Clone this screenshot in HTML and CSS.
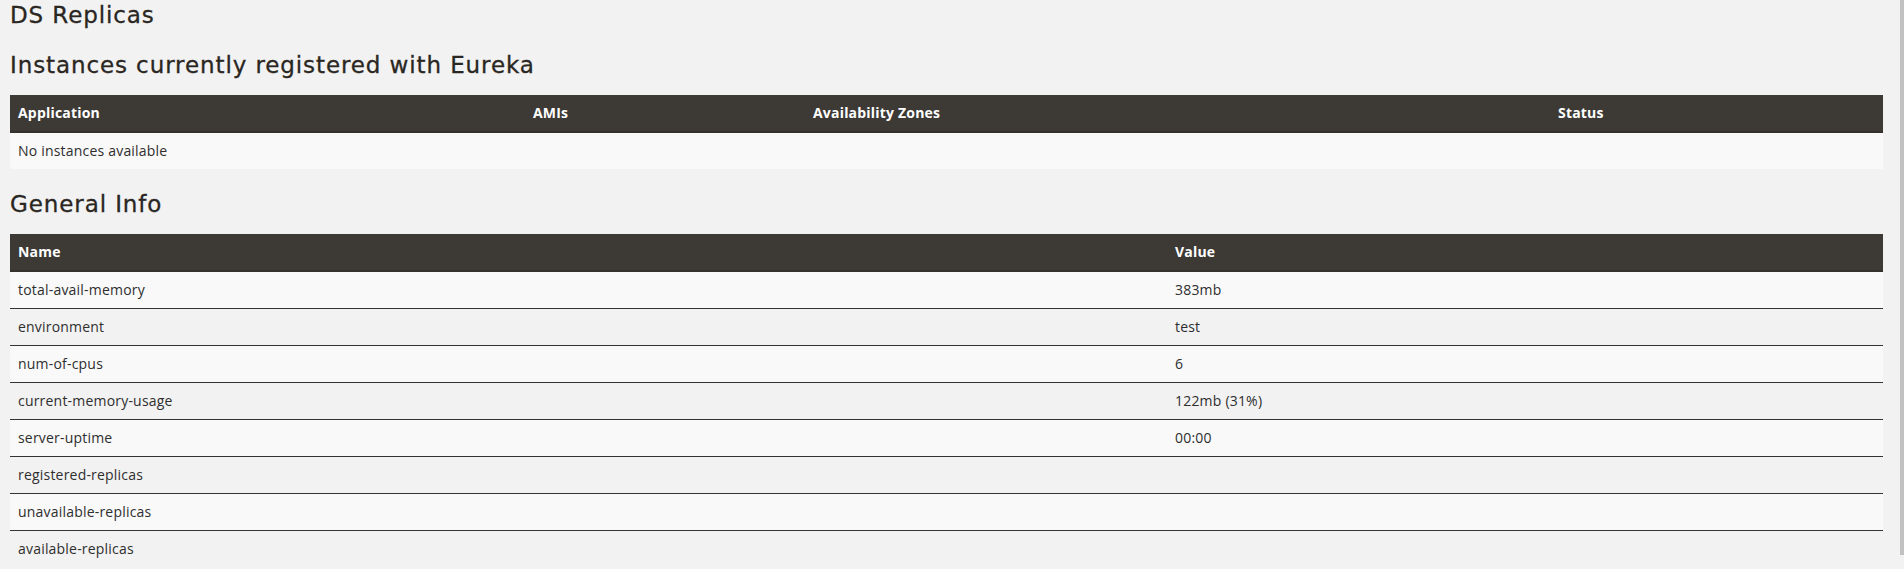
FILE: index.html
```html
<!DOCTYPE html>
<html lang="en">
<head>
<meta charset="utf-8">
<title>Eureka</title>
<link rel="stylesheet" href="styles.css">
</head>
<body>
<main class="page">
  <h1 class="title">DS Replicas</h1>
  <h2 class="section-title">Instances currently registered with Eureka</h2>
  <table class="grid">
    <colgroup>
      <col class="c-app"><col class="c-ami"><col class="c-zone"><col class="c-status">
    </colgroup>
    <thead>
      <tr><th>Application</th><th>AMIs</th><th>Availability Zones</th><th>Status</th></tr>
    </thead>
    <tbody>
      <tr><td colspan="4">No instances available</td></tr>
    </tbody>
  </table>

  <h2 class="section-title gap-top">General Info</h2>
  <table class="grid">
    <colgroup>
      <col class="c-name"><col class="c-value">
    </colgroup>
    <thead>
      <tr><th>Name</th><th>Value</th></tr>
    </thead>
    <tbody>
      <tr><td>total-avail-memory</td><td>383mb</td></tr>
      <tr><td>environment</td><td>test</td></tr>
      <tr><td>num-of-cpus</td><td>6</td></tr>
      <tr><td>current-memory-usage</td><td>122mb (31%)</td></tr>
      <tr><td>server-uptime</td><td>00:00</td></tr>
      <tr><td>registered-replicas</td><td></td></tr>
      <tr><td>unavailable-replicas</td><td></td></tr>
      <tr><td>available-replicas</td><td></td></tr>
    </tbody>
  </table>
</main>
<div class="scroll-thumb"></div>
</body>
</html>
```
FILE: styles.css
```css
html, body {
  margin: 0;
  padding: 0;
  background: #f2f2f2;
  overflow: hidden;
}

body {
  font-family: "Open Sans", "Noto Sans", sans-serif;
  font-size: 14px;
  line-height: 20px;
  color: #2e2e2e;
}

.page {
  padding: 0 21px 0 10px;
}

.title,
.section-title {
  font-family: "DejaVu Sans", sans-serif;
  font-weight: normal;
  font-size: 23px;
  line-height: 26px;
  letter-spacing: 0.9px;
  color: #2a2622;
  -webkit-text-stroke: 0.3px #2a2622;
  margin: 0;
}

.title {
  margin-top: 2px;
}

.section-title {
  margin-top: 24px;
}

.section-title.gap-top {
  margin-top: 22px;
}

.grid {
  width: 100%;
  border-collapse: collapse;
  border-spacing: 0;
  table-layout: fixed;
  margin-top: 17px;
  letter-spacing: 0.2px;
}

.c-app { width: 515px; }
.c-ami { width: 280px; }
.c-zone { width: 745px; }
.c-status { width: 333px; }
.c-name { width: 1157px; }
.c-value { width: 716px; }

.grid th {
  background: #3d3935;
  color: #fff;
  font-weight: bold;
  text-align: left;
  padding: 8px;
  border-bottom: 2px solid #35322e;
}

.grid td {
  padding: 8px;
  height: 20px;
  border-top: 1px solid #333;
  white-space: nowrap;
}

.grid tbody tr:nth-child(odd) td {
  background: #f9f9f9;
}

.scroll-thumb {
  position: fixed;
  top: 0;
  right: 0;
  width: 4px;
  height: 555px;
  background: #c1c1c1;
}
```
